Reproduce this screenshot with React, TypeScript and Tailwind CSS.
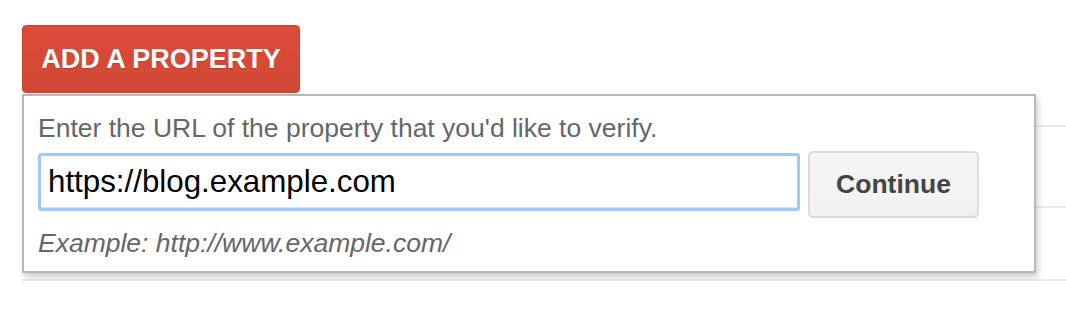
import React from "react";

export default function App() {
  return (
    <div className="w-[1066px] h-[328px] bg-white pt-[25px] pl-[22px] font-['Liberation_Sans',Arial,sans-serif] overflow-hidden">
      <button className="w-[278px] h-[68px] rounded-[4px] bg-gradient-to-b from-[#dd4b39] to-[#d14836] border border-[#d0432f] text-white font-bold text-[27px] leading-none tracking-normal [text-shadow:0_1px_1px_rgba(0,0,0,0.15)] flex items-center justify-center">
        ADD A PROPERTY
      </button>
      <div className="relative">
        <div className="flex flex-col">
          <div className="h-[34px] border-b-2 border-[#ebebeb]" />
          <div className="h-[81px] border-b-2 border-[#ebebeb]" />
          <div className="h-[73px] border-b-2 border-[#ebebeb]" />
        </div>
        <div className="absolute left-0 top-px w-[1014px] h-[179px] bg-white border-2 border-[#b8b8b8] shadow-[2px_4px_6px_rgba(0,0,0,0.2)] pl-[14px] pt-[17px]">
          <div className="text-[26.5px] leading-[30px] text-[#666]">
            Enter the URL of the property that you'd like to verify.
          </div>
          <div className="flex items-start gap-[8px] mt-[8px]">
            <div className="mt-[2px] w-[762px] h-[58px] rounded-[3px] border-[3px] border-[#9ecbf8] bg-white flex items-center pl-[7px] shadow-[inset_0_-1px_0_rgba(80,140,210,0.25)]">
              <span className="text-[31.3px] leading-none text-black">https://blog.example.com</span>
            </div>
            <button className="h-[67px] w-[171px] rounded-[5px] border-2 border-[#dcdcdc] bg-gradient-to-b from-[#f5f5f5] to-[#f1f1f1] text-[#444] font-bold text-[26.5px] leading-none flex items-center justify-center">
              Continue
            </button>
          </div>
          <div className="mt-[10px] text-[26.5px] leading-[30px] italic text-[#666]">
            Example: http://www.example.com/
          </div>
        </div>
      </div>
    </div>
  );
}
